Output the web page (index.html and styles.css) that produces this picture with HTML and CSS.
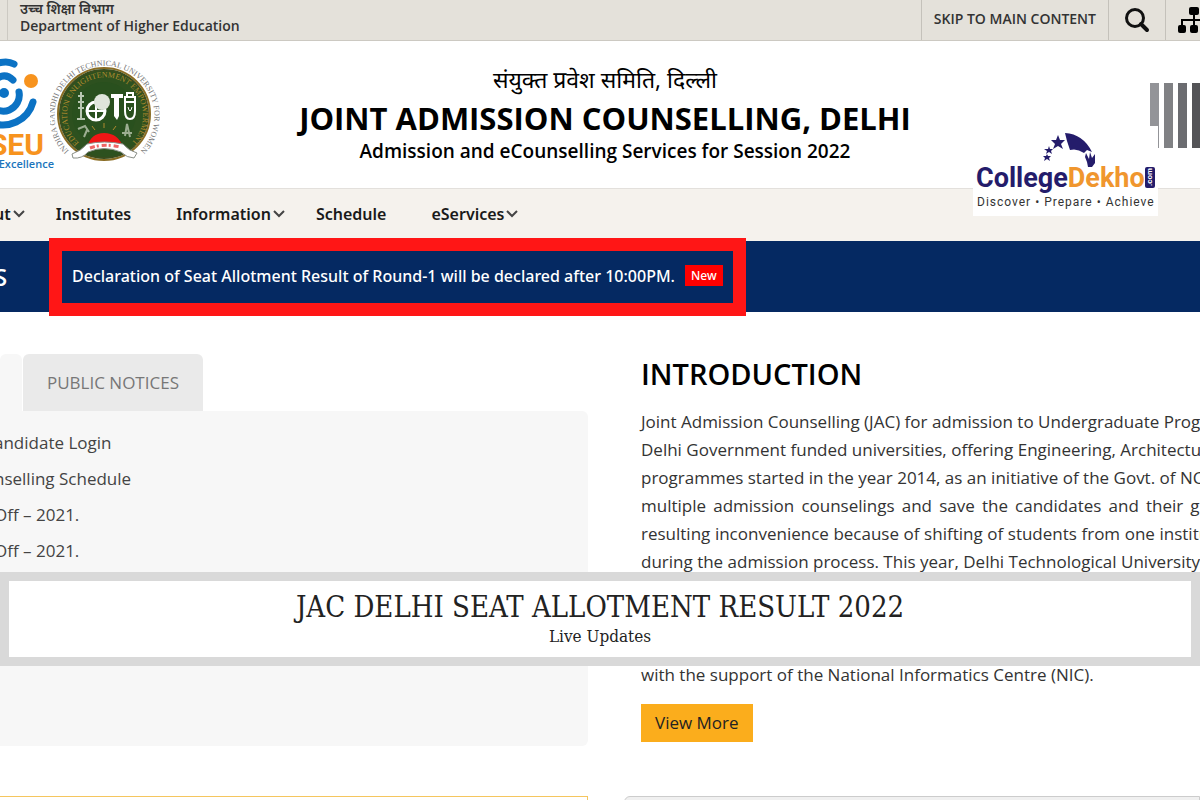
FILE: index.html
```
<!DOCTYPE html>
<html lang="en">
<head>
    <meta charset="UTF-8">
    <meta name="viewport" content="width=device-width, initial-scale=1.0">
    <title>Joint Admission Counselling, Delhi</title>
    <link rel="stylesheet" href="styles.css">
</head>
<body>
    <!-- Top bar -->
    <div class="top-bar">
        <div class="department">
            <span lang="hi">उच्च शिक्षा विभाग</span>
            <span>Department of Higher Education</span>
        </div>
        <div class="top-links">
            <a class="skip-link" href="#intro">SKIP TO MAIN CONTENT</a>
            <button class="icon-btn" type="button" aria-label="Search">
                <svg width="26" height="26" viewBox="0 0 26 26" fill="none" stroke="#111">
                    <circle cx="11" cy="11" r="8.5" stroke-width="3"/>
                    <path d="M17 17l6 6" stroke-width="4" stroke-linecap="round"/>
                </svg>
            </button>
            <a class="icon-btn sitemap" href="#" aria-label="Sitemap">
                <svg width="32" height="26" viewBox="0 0 32 26" fill="#000">
                    <rect x="11" y="0" width="10" height="8" rx="2"/>
                    <rect x="0" y="18" width="8" height="8" rx="2"/>
                    <rect x="12" y="18" width="8" height="8" rx="2"/>
                    <rect x="24" y="18" width="8" height="8" rx="2"/>
                    <path d="M16 8v10M4 18v-5h24v5" fill="none" stroke="#000" stroke-width="2"/>
                </svg>
            </a>
        </div>
    </div>

    <!-- Header -->
    <header class="header">
        <div class="logos">
            <svg class="seu-logo" width="56" height="116" viewBox="0 0 56 116">
                <g fill="none" stroke="#0b72c4" stroke-width="7" stroke-linecap="round">
                    <path d="M-8 10Q5 3 14 8"/>
                    <path d="M-8 26Q4 15 13 24"/>
                    <path d="M19 36A16 16 0 0 1-10 48"/>
                    <path d="M33 46A31 31 0 0 1-10 66"/>
                </g>
                <circle cx="4" cy="37" r="5" fill="#0b72c4"/>
                <circle cx="31" cy="25" r="7" fill="#f7931e"/>
                <text class="seu-name" x="44" y="99" text-anchor="end">SEU</text>
                <text class="seu-tagline" x="54" y="112" text-anchor="end">Excellence</text>
            </svg>
            <svg class="emblem" width="110" height="104" viewBox="0 0 110 104">
                <defs>
                    <path id="outer-ring" d="M19 91A50 50 0 1 1 90 91"/>
                    <path id="inner-ring" d="M29 83A38 38 0 1 1 81 83"/>
                </defs>
                <circle cx="54" cy="54" r="46" fill="#fff" stroke="#8a6d25" stroke-width="2"/>
                <circle cx="54" cy="54" r="44" fill="#2d511f" stroke="#394d1e" stroke-width="2"/>
                <circle cx="54" cy="54" r="32" fill="#29501e"/>
                <text class="ring-outer"><textPath href="#outer-ring">INDIRA GANDHI DELHI TECHNICAL UNIVERSITY FOR WOMEN</textPath></text>
                <text class="ring-inner"><textPath href="#inner-ring">EDUCATION ENLIGHTENMENT EMPOWERMENT</textPath></text>
                <!-- wheel, screw and flask -->
                <g fill="none" stroke="#fff">
                    <circle cx="46" cy="51" r="9" stroke-width="3"/>
                    <path d="M37 51h18M46 42v18" stroke-width="2"/>
                    <path d="M31 32v27M28 36h6M28 42h6M28 48h6M27 59h8" stroke="#b9c7b2" stroke-width="2"/>
                    <path d="M75 37v14q0 8 5 8t5-8V37zM77 37v-4h6v4M75 42h10" stroke-width="2"/>
                    <path d="M78 47q2 8 4 0" stroke-width="1"/>
                </g>
                <circle cx="52" cy="42" r="8" fill="#dfe5db"/>
                <path d="M61 34h12v4h-4v18l-2 4-3-4V38h-3z" fill="#fff"/>
                <path d="M28 69l7-3 4 6M34 77l3-7M75 76l2-12 3 13M72 73h10" stroke="#9cae91" fill="none" stroke-width="2"/>
                <path d="M54 68v-5M45 70l-3-4M63 70l3-4" stroke="#b08a2e" stroke-width="1"/>
                <path d="M37 87Q41 73 54 73Q68 73 73 87z" fill="#f01616"/>
                <path d="M22 94Q31 91 37 84Q54 80 73 84Q79 91 87 93L84 98Q77 98 71 92Q54 85 38 92Q32 99 23 98z" fill="#fff" stroke="#8a8f88" stroke-width="1"/>
                <path d="M40 88Q54 83 70 87" stroke="#e66" stroke-width="3" stroke-dasharray="5 2 2 3" fill="none"/>
            </svg>
        </div>
        <div class="site-title">
            <p class="title-hindi" lang="hi">संयुक्त प्रवेश समिति, दिल्ली</p>
            <h1>JOINT ADMISSION COUNSELLING, DELHI</h1>
            <p class="session">Admission and eCounselling Services for Session 2022</p>
        </div>
        <svg class="bars-logo" width="50" height="65" viewBox="0 0 50 65">
            <rect x="0" width="9" height="65" fill="#939498"/>
            <rect x="14" width="9" height="65" fill="#808184"/>
            <rect x="28" width="9" height="65" fill="#6b6c70"/>
            <rect x="42" width="9" height="65" fill="#545457"/>
        </svg>
        <a class="dekho" href="#">
            <svg width="185" height="90" viewBox="0 0 185 90">
                <g fill="#241c6b">
                    <path d="M85 9l2 5 5 0-4 4 2 5-5-3-5 3 2-5-4-4 5 0z"/>
                    <path d="M76 20l1 3h3l-2 2 1 3-3-2-3 2 1-3-3-2h4z"/>
                    <path d="M74 28l1 2h3l-2 2 1 3-3-2-3 2 1-3-2-2h3z"/>
                    <path d="M92 7Q110 8 119 26L114 24L111 27Q104 22 97 24L94 15z"/>
                    <path d="M113 27l3 6 1-7 2 6 3-4v9l-3 4h-4l-1-5-2-5z"/>
                    <rect x="172" y="41" width="10" height="21" rx="2"/>
                </g>
                <text class="dekho-name" x="3" y="61">College<tspan class="dekho-accent">Dekho</tspan></text>
                <text class="dekho-com" transform="translate(179 60) rotate(-90)">.com</text>
                <text class="dekho-tagline" x="4" y="80">Discover • Prepare • Achieve</text>
            </svg>
        </a>
    </header>

    <!-- Navigation -->
    <nav class="nav">
        <a href="#">ut<svg class="caret" width="12" height="8" viewBox="0 0 12 8"><path d="M1 1l5 5 5-5"/></svg></a>
        <a href="#">Institutes</a>
        <a href="#">Information<svg class="caret" width="12" height="8" viewBox="0 0 12 8"><path d="M1 1l5 5 5-5"/></svg></a>
        <a href="#">Schedule</a>
        <a href="#">eServices<svg class="caret" width="12" height="8" viewBox="0 0 12 8"><path d="M1 1l5 5 5-5"/></svg></a>
    </nav>

    <!-- News ticker -->
    <div class="news-bar">
        <div class="news-label">S</div>
        <div class="news-item">
            <a href="#">Declaration of Seat Allotment Result of Round-1 will be declared after 10:00PM.</a>
            <span class="new-badge">New</span>
        </div>
    </div>

    <main class="content">
        <section class="notices">
            <div class="tabs">
                <button class="tab active" type="button" aria-label="Current"></button>
                <button class="tab" type="button">PUBLIC NOTICES</button>
            </div>
            <ul class="notice-list">
                <li><a href="#">andidate Login</a></li>
                <li><a href="#">nselling Schedule</a></li>
                <li><a href="#">Off – 2021.</a></li>
                <li><a href="#">Off – 2021.</a></li>
            </ul>
        </section>

        <section class="intro" id="intro">
            <h2>INTRODUCTION</h2>
            <p class="intro-text">
                <span>Joint Admission Counselling (JAC) for admission to Undergraduate Programmes in</span>
                <span>Delhi Government funded universities, offering Engineering, Architecture and other</span>
                <span>programmes started in the year 2014, as an initiative of the Govt. of NCT of Delhi</span>
                <span>multiple admission counselings and save the candidates and their guardian</span>
                <span>resulting inconvenience because of shifting of students from one institution to</span>
                <span>during the admission process. This year, Delhi Technological University (DTU) is</span>
            </p>
            <p class="intro-end">with the support of the National Informatics Centre (NIC).</p>
            <a class="view-more" href="#">View More</a>
        </section>
    </main>

    <div class="cards">
        <div class="card card-yellow"></div>
        <div class="card card-gray"></div>
    </div>

    <div class="banner">
        <h2>JAC DELHI SEAT ALLOTMENT RESULT 2022</h2>
        <p>Live Updates</p>
    </div>
</body>
</html>
```

FILE: styles.css
```
* {
    box-sizing: border-box;
}

body {
    position: relative;
    height: 100vh;
    margin: 0;
    overflow: hidden;
    background-color: #fff;
    color: #333;
    font-family: "Open Sans", "Noto Sans", sans-serif;
    font-size: 17px;
}

h1, h2, p, ul {
    margin: 0;
    padding: 0;
}

a {
    color: inherit;
    text-decoration: none;
}

button {
    border: none;
    font: inherit;
    cursor: pointer;
}

/* Top bar */
.top-bar {
    display: flex;
    justify-content: space-between;
    height: 41px;
    padding-left: 7px;
    background-color: #e4e1da;
    border-bottom: 1px solid #ccc9c2;
}

.department {
    display: flex;
    flex-direction: column;
    padding-left: 12px;
    border-left: 1px solid #ccc9c2;
    color: #333;
    font-size: 14px;
    font-weight: 600;
    line-height: 17px;
}

.top-links {
    display: flex;
}

.skip-link,
.icon-btn {
    display: flex;
    align-items: center;
    padding: 0 12px;
    border-left: 1px solid #c4c1ba;
    background: none;
    font-size: 14px;
    font-weight: 600;
}

.skip-link {
    padding-bottom: 4px;
}

.icon-btn {
    padding: 0 15px;
}

.sitemap {
    width: 35px;
    padding: 0 0 0 12px;
    overflow: hidden;
}

.sitemap svg {
    flex: none;
}

/* Header */
.header {
    position: relative;
    display: grid;
    grid-template-columns: 1fr auto 1fr;
    height: 147px;
    padding-left: 10px;
}

.logos {
    display: flex;
    align-items: flex-start;
    margin-left: -10px;
    padding-top: 15px;
}

.logos svg {
    flex: none;
}

.seu-logo {
    margin-right: -6px;
}

.emblem {
    margin-top: 4px;
}

.seu-name {
    fill: #f7931e;
    font-family: Roboto, sans-serif;
    font-size: 30px;
    font-weight: 700;
}

.seu-tagline {
    fill: #1b75bc;
    font-size: 11px;
    font-weight: 600;
}

.ring-outer {
    fill: #777;
    font-family: "Liberation Serif", serif;
    font-size: 8px;
}

.ring-inner {
    fill: #b08a2e;
    font-family: "Liberation Serif", serif;
    font-size: 8px;
}

.site-title {
    padding-top: 22px;
    color: #000;
    text-align: center;
}

.title-hindi {
    font-size: 23px;
    line-height: 32px;
}

.site-title h1 {
    font-size: 31px;
    font-weight: 700;
    line-height: 46px;
}

.session {
    font-size: 19px;
    font-weight: 600;
    line-height: 20px;
}

.bars-logo {
    justify-self: end;
    margin-top: 42px;
}

/* Partner badge over the header and the menu */
.dekho {
    position: absolute;
    top: 85px;
    right: 42px;
    height: 90px;
    background-color: #fff;
}

.dekho-name {
    fill: #241c6b;
    font-family: Roboto, sans-serif;
    font-size: 27px;
    font-weight: 700;
}

.dekho-accent {
    fill: #f0962e;
}

.dekho-com {
    fill: #fff;
    font-family: Roboto, sans-serif;
    font-size: 8px;
    font-weight: 700;
}

.dekho-tagline {
    fill: #333;
    font-family: Roboto, sans-serif;
    font-size: 12px;
    letter-spacing: 1px;
}

/* Navigation */
.nav {
    display: flex;
    align-items: center;
    height: 53px;
    margin-left: -6px;
    padding-bottom: 2px;
    background-color: #f5f2ed;
    border-top: 1px solid #e3e0dc;
    color: #1a1a1a;
    font-family: "Noto Sans", sans-serif;
    font-size: 16px;
    font-weight: 600;
}

.nav a {
    display: flex;
    align-items: center;
    margin-right: 31px;
}

.nav a:nth-child(2),
.nav a:nth-child(4) {
    margin-right: 45px;
}

.caret {
    margin-left: 2px;
    fill: none;
    stroke: #444;
    stroke-width: 2;
}

/* News ticker */
.news-bar {
    display: flex;
    align-items: center;
    height: 71px;
    background-color: #052962;
    color: #fff;
}

.news-label {
    width: 55px;
    margin-left: -6px;
    font-size: 24px;
    font-weight: 600;
}

.news-item {
    display: flex;
    align-items: center;
    gap: 10px;
    flex: none;
    height: 78px;
    padding: 0 10px 2px;
    border: 13px solid #ff1616;
    font-family: "Noto Sans", sans-serif;
    font-size: 16px;
    font-weight: 500;
}

.new-badge {
    padding: 0 6px;
    background-color: #f00;
    font-size: 12px;
    line-height: 21px;
}

/* Main content */
.content {
    display: grid;
    grid-template-columns: 49% 1fr;
    gap: 53px;
    padding-top: 42px;
}

.notices {
    display: flex;
    flex-direction: column;
}

.tabs {
    display: flex;
    gap: 1px;
}

.tab {
    height: 57px;
    padding: 0 24px;
    background-color: #eaeaea;
    border-radius: 6px 6px 0 0;
    color: #777;
}

.tab.active {
    width: 22px;
    padding: 0;
    background-color: #f7f7f7;
}

.notice-list {
    display: flex;
    flex-direction: column;
    gap: 12px;
    height: 335px;
    margin-left: -6px;
    padding-top: 20px;
    background-color: #f7f7f7;
    border-radius: 0 6px 6px 0;
    color: #444;
    line-height: 24px;
    list-style: none;
}

.intro {
    min-width: 0;
}

.intro h2 {
    color: #000;
    font-size: 29px;
    font-weight: 600;
    line-height: 40px;
}

.intro-text {
    width: 620px;
    margin-top: 14px;
    line-height: 28px;
}

.intro-text span {
    display: block;
    text-align: justify;
    text-align-last: justify;
    white-space: nowrap;
}

.intro-end {
    margin: 85px 0 15px;
    line-height: 28px;
}

.view-more {
    display: inline-block;
    padding: 0 14px;
    background-color: #fbad1c;
    color: #222;
    line-height: 38px;
}

/* Cards */
.cards {
    display: grid;
    grid-template-columns: 49% 1fr;
    gap: 36px;
    padding-top: 50px;
}

.card {
    height: 60px;
}

.card-yellow {
    border: 1px solid #f5c65f;
    border-left: none;
}

.card-gray {
    background-color: #f0f0f0;
    border: 1px solid #ccc;
    border-radius: 6px 0 0 0;
}

/* Banner across the page */
.banner {
    position: absolute;
    top: 572px;
    left: 0;
    right: 0;
    padding: 8px 0 9px;
    background-color: #fff;
    border: 9px solid #d9d9d9;
    color: #222;
    font-family: "DejaVu Serif Condensed", "DejaVu Serif", serif;
    text-align: center;
}

.banner h2 {
    font-size: 29px;
    font-weight: 400;
    line-height: 36px;
}

.banner p {
    font-size: 17px;
    line-height: 23px;
}
```
